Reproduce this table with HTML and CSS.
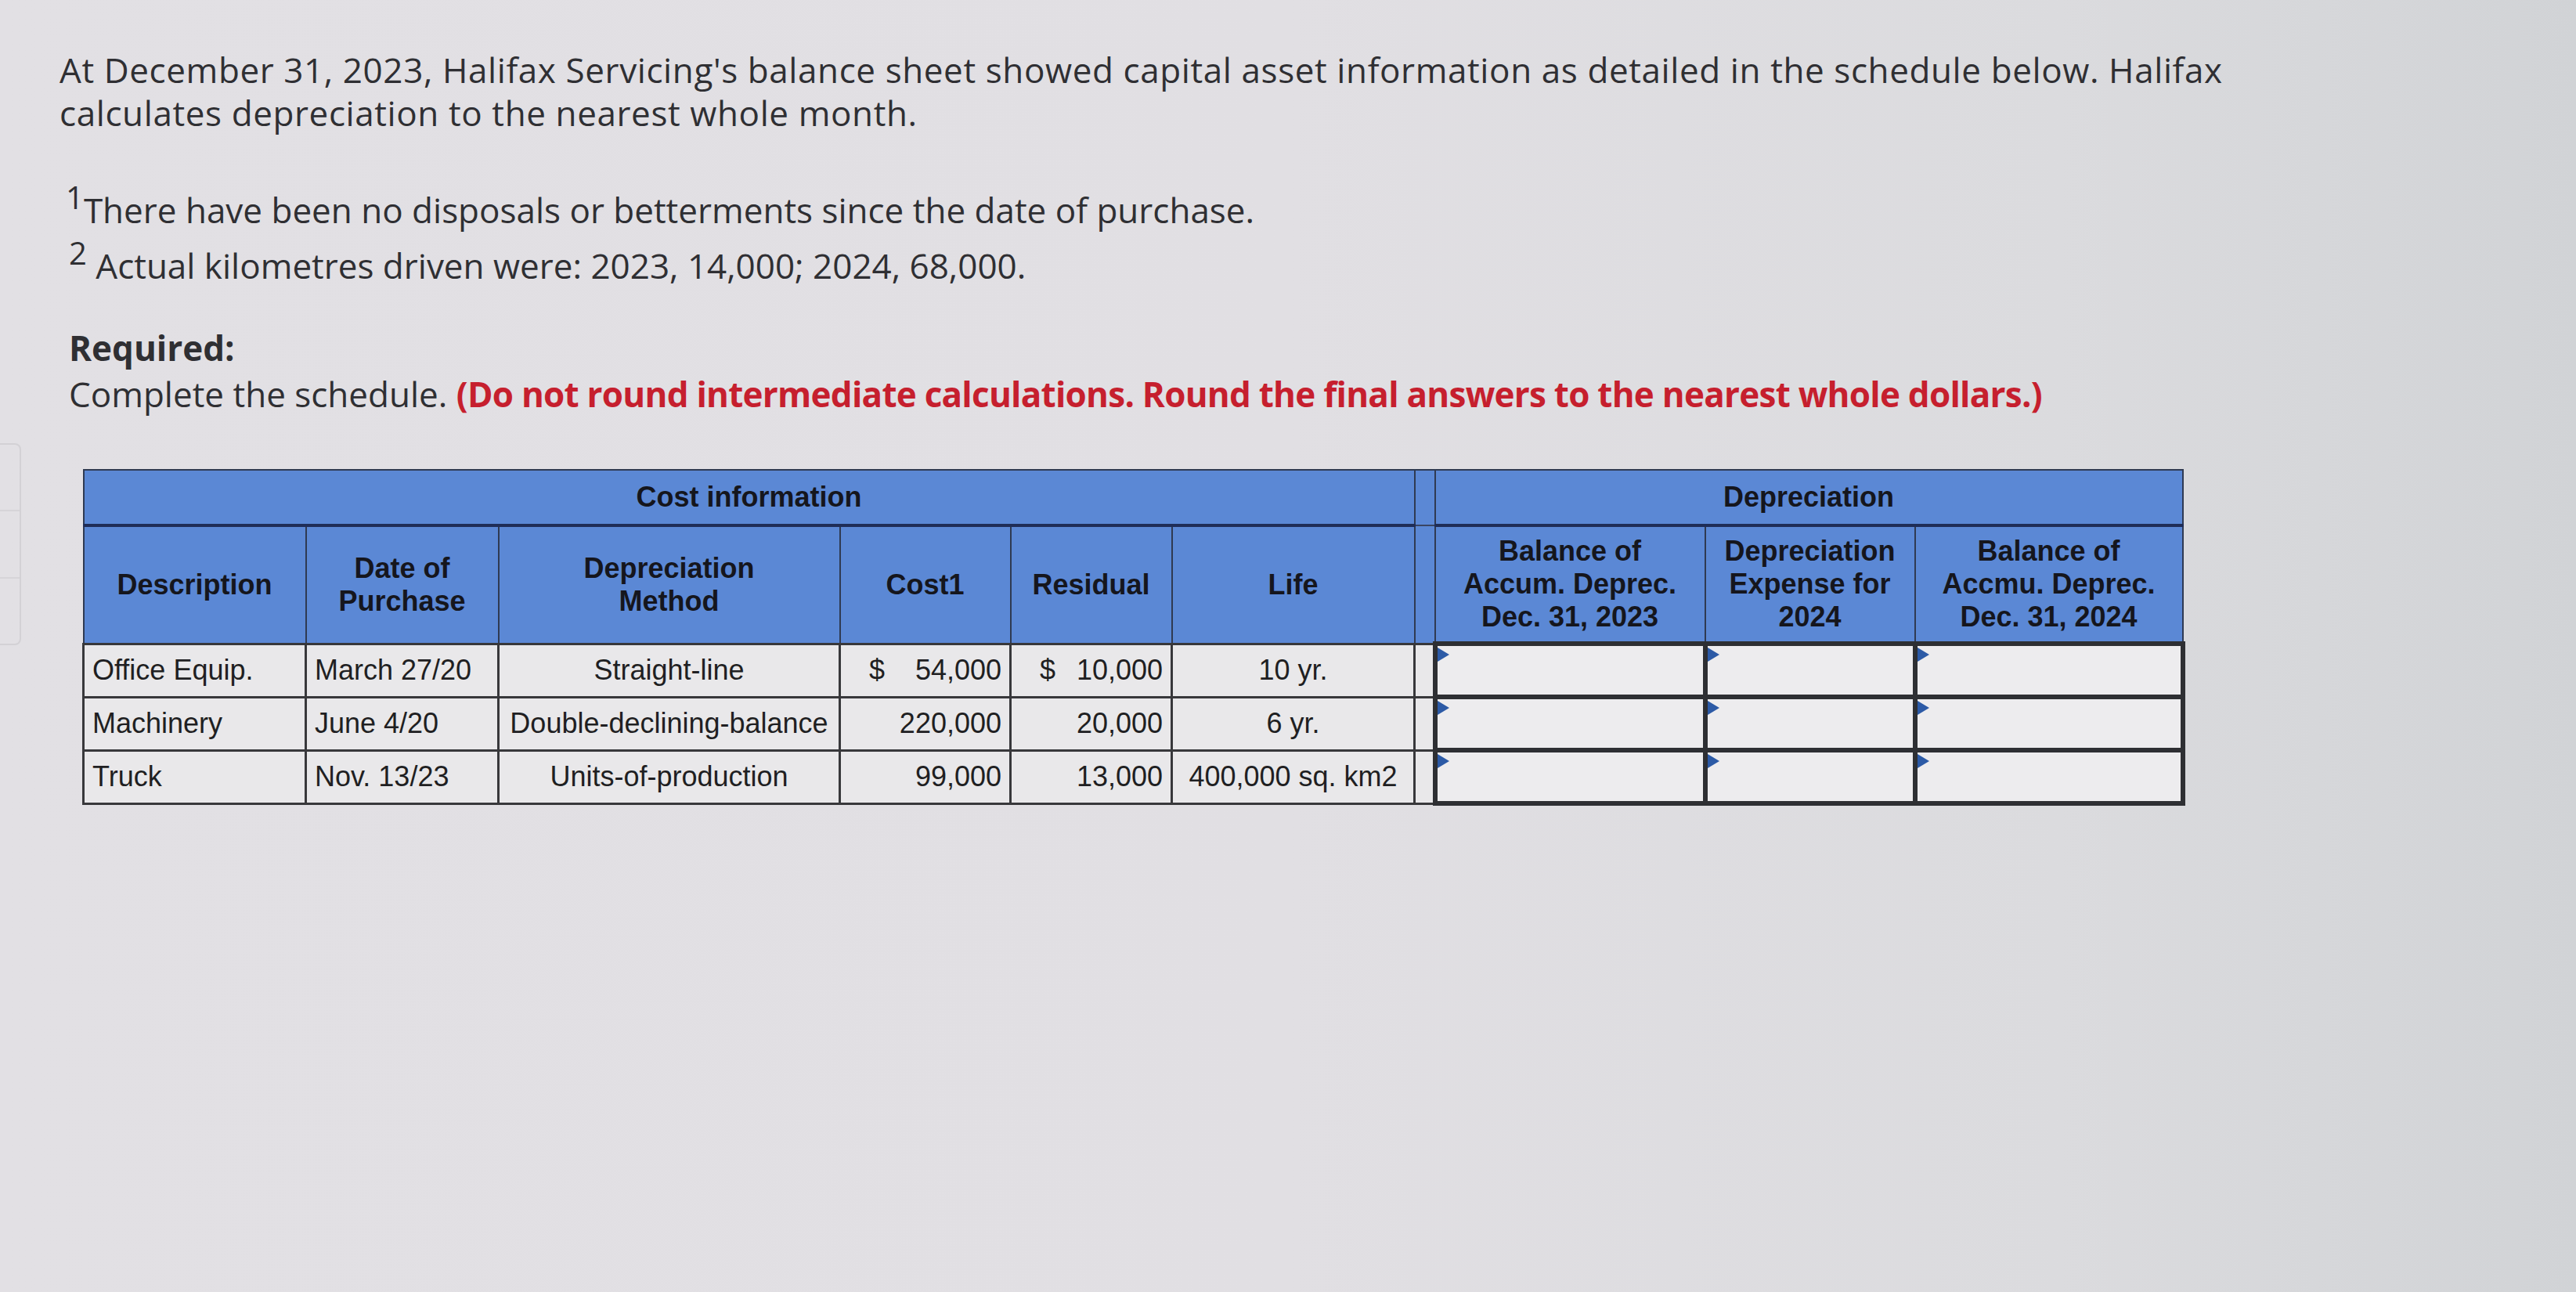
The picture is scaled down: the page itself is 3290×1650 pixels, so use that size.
FILE: index.html
```html
<!DOCTYPE html>
<html lang="en">
<head>
<meta charset="utf-8">
<title>Halifax Servicing – Depreciation schedule</title>
<link rel="stylesheet" href="styles.css">
</head>
<body>
<div class="edge-panel"><div class="edge-line"></div><div class="edge-line"></div></div>
<main class="content">
  <p class="intro">At December 31, 2023, Halifax Servicing's balance sheet showed capital asset information as detailed in the schedule below. Halifax calculates depreciation to the nearest whole month.</p>
  <p class="note note-1"><sup class="fn">1</sup>There have been no disposals or betterments since the date of purchase.</p>
  <p class="note note-2"><sup class="fn">2</sup> Actual kilometres driven were: 2023, 14,000; 2024, 68,000.</p>
  <div class="required">
    <div class="req-title">Required:</div>
    <div class="req-text">Complete the schedule. <span class="warn">(Do not round intermediate calculations. Round the final answers to the nearest whole dollars.)</span></div>
  </div>

  <table class="sched">
    <colgroup>
      <col class="c-desc"><col class="c-date"><col class="c-method"><col class="c-cost"><col class="c-res"><col class="c-life"><col class="c-sep"><col class="c-bal"><col class="c-exp"><col class="c-bal2">
    </colgroup>
    <thead>
      <tr class="h1">
        <th colspan="6">Cost information</th>
        <th class="sep"></th>
        <th colspan="3">Depreciation</th>
      </tr>
      <tr class="h2">
        <th>Description</th>
        <th>Date of<br>Purchase</th>
        <th>Depreciation<br>Method</th>
        <th>Cost1</th>
        <th>Residual</th>
        <th>Life</th>
        <th class="sep"></th>
        <th>Balance of<br>Accum. Deprec.<br>Dec. 31, 2023</th>
        <th>Depreciation<br>Expense for<br>2024</th>
        <th>Balance of<br>Accmu. Deprec.<br>Dec. 31, 2024</th>
      </tr>
    </thead>
    <tbody>
      <tr>
        <td class="left">Office Equip.</td>
        <td class="left">March 27/20</td>
        <td class="center">Straight-line</td>
        <td class="money"><span class="cur">$</span><span>54,000</span></td>
        <td class="money"><span class="cur">$</span><span>10,000</span></td>
        <td class="center">10 yr.</td>
        <td class="sep"></td>
        <td class="input"></td>
        <td class="input"></td>
        <td class="input"></td>
      </tr>
      <tr>
        <td class="left">Machinery</td>
        <td class="left">June 4/20</td>
        <td class="center">Double-declining-balance</td>
        <td class="money"><span>220,000</span></td>
        <td class="money"><span>20,000</span></td>
        <td class="center">6 yr.</td>
        <td class="sep"></td>
        <td class="input"></td>
        <td class="input"></td>
        <td class="input"></td>
      </tr>
      <tr>
        <td class="left">Truck</td>
        <td class="left">Nov. 13/23</td>
        <td class="center">Units-of-production</td>
        <td class="money"><span>99,000</span></td>
        <td class="money"><span>13,000</span></td>
        <td class="center tight">400,000 sq. km2</td>
        <td class="sep"></td>
        <td class="input"></td>
        <td class="input"></td>
        <td class="input"></td>
      </tr>
    </tbody>
  </table>
</main>
</body>
</html>
```

FILE: styles.css
```css
html, body {
  margin: 0;
  padding: 0;
}

body {
  min-height: 1650px;
  background: linear-gradient(90deg, #e2e0e4 0%, #e1dfe3 50%, #dbdbde 80%, #d1d3d6 100%);
  font-family: "Open Sans", "Liberation Sans", sans-serif;
  color: #2f2f33;
  position: relative;
}

.edge-panel {
  position: absolute;
  left: 0;
  top: 566px;
  width: 25px;
  height: 254px;
  border: 2px solid #d3d1d5;
  border-left: none;
  border-radius: 0 8px 8px 0;
  display: flex;
  flex-direction: column;
  justify-content: space-evenly;
}

.edge-line {
  height: 2px;
  background: #d6d4d8;
}

.content {
  padding: 62px 0 0 76px;
}

.intro {
  margin: 0;
  font-size: 44px;
  line-height: 55px;
  letter-spacing: 0.6px;
  width: 2830px;
}

.note {
  margin: 0;
  font-size: 44px;
  line-height: 55px;
}

.note-1 {
  margin-top: 69px;
  margin-left: 8px;
}

.note-2 {
  margin-top: 16px;
  margin-left: 12px;
}

.fn {
  font-size: 40px;
  line-height: 0;
  vertical-align: 0.45em;
}

.required {
  margin-top: 48px;
  margin-left: 12px;
  font-size: 44px;
  line-height: 59px;
}

.req-title {
  font-weight: 700;
}

.warn {
  color: #c61f2e;
  font-weight: 700;
  letter-spacing: -0.75px;
}

/* ---------- Table ---------- */
.sched {
  margin-top: 66px;
  margin-left: 29px;
  border-collapse: collapse;
  table-layout: fixed;
  width: 2681px;
  font-family: "Liberation Sans", Arial, sans-serif;
  font-size: 36px;
  color: #1f1f22;
}

.c-desc { width: 284px; }
.c-date { width: 246px; }
.c-method { width: 436px; }
.c-cost { width: 218px; }
.c-res { width: 206px; }
.c-life { width: 310px; }
.c-sep { width: 26px; }
.c-bal { width: 345px; }
.c-exp { width: 268px; }
.c-bal2 { width: 342px; }

.sched th {
  background: #5b88d5;
  color: #15161d;
  font-weight: 700;
  line-height: 42px;
  border: 2px solid #2f3a52;
  padding: 0 4px;
  text-align: center;
  vertical-align: middle;
}

.sched .h1 th {
  height: 68px;
  border-bottom: 4px solid #1f2d57;
}

.sched .h1 th.sep {
  border-bottom: 2px solid #3a4562;
}

.sched .h2 th {
  height: 146px;
}

.sched td {
  background: #e9e8ea;
  border: 3px solid #38383b;
  height: 62px;
  padding: 0 10px;
  line-height: 40px;
  vertical-align: middle;
  white-space: nowrap;
}

.sched td.left { text-align: left; }
.sched td.center { text-align: center; }
.sched td.tight { padding: 0 4px; }

.sched td.money {
  text-align: right;
  padding: 0 10px 0 36px;
}

.money .cur {
  float: left;
}

.sched td.sep,
.sched th.sep {
  padding: 0;
}

.sched td.input {
  position: relative;
  background: #edecee;
  border: 6px solid #2e2f33;
  padding: 0;
}

.sched td.input::before {
  content: "";
  position: absolute;
  left: 0;
  top: 2px;
  width: 0;
  height: 0;
  border-left: 15px solid #2c5aa6;
  border-top: 9px solid transparent;
  border-bottom: 9px solid transparent;
}
```
